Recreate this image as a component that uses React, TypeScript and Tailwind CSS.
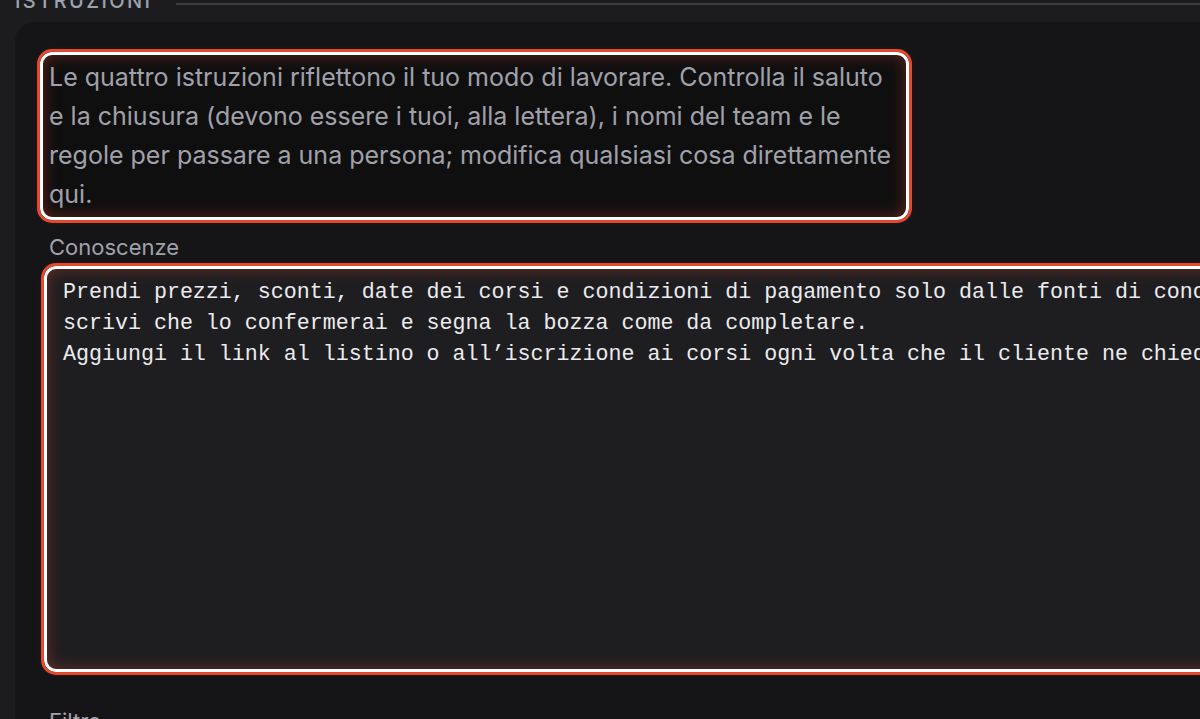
const instructionLines = [
  "Le quattro istruzioni riflettono il tuo modo di lavorare. Controlla il saluto",
  "e la chiusura (devono essere i tuoi, alla lettera), i nomi del team e le",
  "regole per passare a una persona; modifica qualsiasi cosa direttamente",
  "qui.",
];

const knowledgeLines = [
  "Prendi prezzi, sconti, date dei corsi e condizioni di pagamento solo dalle fonti di conoscenza; se un dato manca,",
  "scrivi che lo confermerai e segna la bozza come da completare.",
  "Aggiungi il link al listino o all’iscrizione ai corsi ogni volta che il cliente ne chiede uno.",
];

const highlight =
  "border-[3px] border-white outline outline-[3px] outline-[#e2492e] shadow-[inset_0_0_16px_rgba(226,73,46,0.38),0_0_6px_rgba(226,73,46,0.35)]";

export default function App() {
  return (
    <div className="h-[719px] w-[1200px] overflow-hidden bg-[#1c1c1f] font-['Inter',sans-serif]">
      <div className="flex h-[22px] items-start pl-[15px]">
        <span className="-mt-[9px] text-[20px] font-medium uppercase leading-none tracking-[0.12em] text-[#9ca3af]">
          Istruzioni
        </span>
        <div className="ml-[24px] mt-[3px] h-[2px] flex-1 bg-[#3a3a40]" />
      </div>

      <div className="ml-[15px] w-[1300px] rounded-tl-[20px] bg-[#151517] pl-[25px] pt-[30px]">
        <div
          className={`w-[869px] rounded-[12px] bg-[#0f0f10] px-[6px] py-[3px] ${highlight}`}
        >
          <p className="text-[25px] leading-[39px] text-[#a1a1aa]">
            {instructionLines.map((line, idx) => (
              <span key={idx} className="block whitespace-nowrap">
                {line}
              </span>
            ))}
          </p>
        </div>

        <div className="mt-[14px] pl-[9px] text-[22px] leading-[26px] text-[#a1a1aa]">
          Conoscenze
        </div>

        <div
          className={`ml-[4px] mt-[6px] h-[406px] w-[1240px] overflow-hidden rounded-[12px] bg-[#1e1e21] px-[16px] pb-[7px] pt-[8px] ${highlight}`}
        >
          <div className="font-['Liberation_Mono',monospace] text-[21.65px] leading-[31px] text-[#ececee]">
            {knowledgeLines.map((line, idx) => (
              <div key={idx} className="whitespace-pre">
                {line}
              </div>
            ))}
          </div>
        </div>

        <div className="mt-[36px] pl-[9px] text-[22px] leading-[26px] text-[#a1a1aa]">
          Filtro
        </div>
      </div>
    </div>
  );
}
